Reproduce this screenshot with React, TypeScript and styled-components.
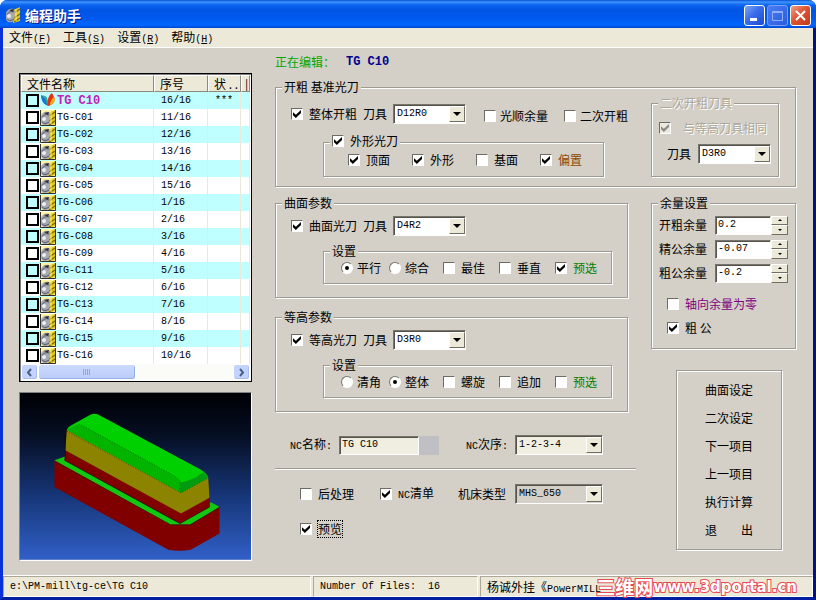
import React from "react";
import styled, { createGlobalStyle, css } from "styled-components";

const FACE = "#d4d0c8";
const CREAM = "#ece9d8";
const SONG = '"Noto Sans CJK SC", "Liberation Sans", sans-serif';
const MONO = '"Liberation Mono", "Noto Sans CJK SC", monospace';

const GlobalStyle = createGlobalStyle`
  *, *::before, *::after { box-sizing: border-box; }
  body {
    margin: 0;
    background: #fff;
    color: #000;
    font: 12px/16px ${SONG};
  }
  button, input, select { font: inherit; color: inherit; margin: 0; }
`;

const Window = styled.div`
  min-height: 100vh;
  display: flex;
  flex-direction: column;
  background: ${FACE};
  border: 3px solid #0831d9;
  border-top: 0;
  border-right-color: #00138c;
  border-bottom-color: #001ea0;
  border-radius: 8px 8px 0 0;
`;

const TitleBar = styled.header`
  height: 28px;
  margin: 0 -3px;
  padding: 2px 5px 0 5px;
  display: flex;
  align-items: center;
  gap: 4px;
  border-radius: 7px 7px 0 0;
  background: linear-gradient(#0a50d0 0, #3d95ff 2px, #0a63ee 5px, #0054e3 10px, #0058ee 18px, #0066ff 25px, #0046cf 28px);
`;

const Title = styled.h1`
  flex: 1;
  margin: 0;
  font-size: 14px;
  line-height: 20px;
  color: #fff;
  text-shadow: 1px 1px #0a1883;
`;

const CaptionButtons = styled.div`
  display: flex;
  gap: 2px;
`;

const CaptionButton = styled.button<{ $kind: "min" | "max" | "close" }>`
  width: 21px;
  height: 21px;
  padding: 0;
  display: grid;
  place-items: center;
  border: 1px solid ${(p) => (p.$kind === "max" ? "#7ba0f0" : "#fff")};
  border-radius: 3px;
  background: ${(p) =>
    p.$kind === "close"
      ? "linear-gradient(135deg, #f0a088, #dd5535 45%, #c03a18)"
      : p.$kind === "max"
        ? "linear-gradient(135deg, #4a7ef0, #2a5be0)"
        : "linear-gradient(135deg, #7ea4f8, #3a6cea 45%, #1c4bd0)"};
`;

const MenuBar = styled.nav`
  height: 20px;
  padding: 0 6px;
  display: flex;
  align-items: center;
  gap: 12px;
  background: ${CREAM};
  border-bottom: 1px solid #fff;
`;

const MenuButton = styled.button`
  padding: 0;
  border: 0;
  background: none;
  white-space: nowrap;
`;

const Key = styled.span`
  font: 10px/14px ${MONO};
`;

const Body = styled.main`
  flex: 1;
  display: grid;
  grid-template-columns: 233px minmax(0, 1fr);
  gap: 23px;
  padding: 5px 17px 12px 16px;
`;

const Side = styled.div`
  display: flex;
  flex-direction: column;
  gap: 10px;
  padding-top: 20px;
`;

const ListFrame = styled.div`
  padding: 1px;
  border: 1px solid #000;
  background: #fff;
  box-shadow: inset 1px 1px #808080;
`;

const FileTable = styled.table`
  width: 100%;
  table-layout: fixed;
  border-collapse: separate;
  border-spacing: 0;
`;

const HeadCell = styled.th`
  height: 17px;
  padding: 0 0 0 5px;
  overflow: hidden;
  white-space: nowrap;
  text-align: left;
  font-weight: 400;
  line-height: 15px;
  background: ${CREAM};
  border: 1px solid;
  border-color: #fff #8c8a7c #8c8a7c #fff;
  &:last-child { padding-left: 3px; }
`;

const Cell = styled.td`
  height: 17px;
  padding: 0 0 0 7px;
  overflow: hidden;
  white-space: nowrap;
  border-right: 1px solid #ece9d8;
  font: 10px/16px ${MONO};
  &:first-child { padding-left: 5px; }
`;

const FileRow = styled.tr<{ $current?: boolean }>`
  background: #fff;
  &:nth-child(odd) { background: #bfffff; }
  ${(p) => p.$current && css`td:first-child { color: #c020c0; font: bold 12px/16px ${MONO}; }`}
`;

const FileLabel = styled.label`
  display: flex;
  align-items: center;
  gap: 1px;
`;

const FileCheck = styled.input`
  appearance: none;
  width: 13px;
  height: 13px;
  border: 2px solid #000;
`;

const HScroll = styled.div`
  height: 16px;
  display: flex;
  justify-content: space-between;
  background: #fbfbf8;
`;

const ScrollButton = styled.button`
  width: 17px;
  height: 16px;
  padding: 0;
  display: grid;
  place-items: center;
  border: 1px solid #fff;
  border-radius: 3px;
  background: #c3d3fd;
  box-shadow: inset -1px -1px #a8bdf0;
`;

const ScrollTrack = styled.div`
  flex: 1;
`;

const Thumb = styled.div`
  width: 50%;
  height: 16px;
  display: flex;
  align-items: center;
  justify-content: center;
  border: 1px solid #fff;
  border-radius: 3px;
  background: linear-gradient(#cbdafe, #b9cbf8);
  box-shadow: inset -1px -1px #98b0e8;
`;

const Preview = styled.div`
  border: 1px solid;
  border-color: #808080 #fff #fff #808080;
  svg { display: block; width: 100%; }
`;

const Main = styled.div`
  display: flex;
  flex-direction: column;
  gap: 8px;
`;

const Editing = styled.div`
  display: flex;
  align-items: center;
  gap: 11px;
  height: 18px;
  color: #00a800;
`;

const EditingName = styled.strong`
  color: #000090;
  font: bold 12px/16px ${MONO};
`;

const Group = styled.fieldset<{ $pad?: string }>`
  min-width: 0;
  margin: 0;
  padding: ${(p) => p.$pad ?? "0"};
  border: 1px solid #9d9a92;
  box-shadow: 1px 1px #fff, inset 1px 1px #fff;
`;

const GroupTitle = styled.legend<{ $disabled?: boolean; $low?: boolean }>`
  margin-left: 6px;
  padding: 0 2px ${(p) => (p.$low ? "2px" : "0")};
  background: ${FACE};
  white-space: nowrap;
  ${(p) => p.$disabled && css`color: #aca899; text-shadow: 1px 1px #fff;`}
`;

const RoughBody = styled.div`
  display: grid;
  grid-template-columns: minmax(0, 1fr) 128px;
  gap: 20px;
`;

const RoughMain = styled.div`
  padding: 9px 0 9px 15px;
`;

const SubGroup = styled(Group)<{ $top: number; $width: number }>`
  width: ${(p) => p.$width}px;
  margin: ${(p) => p.$top}px 0 0 32px;
`;

const Row = styled.div<{ $gap?: number; $end?: boolean; $left?: number }>`
  display: flex;
  align-items: ${(p) => (p.$end ? "flex-end" : "center")};
  gap: ${(p) => p.$gap ?? 6}px;
  padding-left: ${(p) => p.$left ?? 0}px;
`;

const ToolRow = styled(Row)`
  height: 20px;
`;

const ChoiceLabel = styled.label<{ $color?: string; $width?: number; $disabled?: boolean; $gap?: number }>`
  display: flex;
  flex: none;
  align-items: center;
  gap: ${(p) => p.$gap ?? 6}px;
  width: ${(p) => (p.$width ? p.$width + "px" : "auto")};
  white-space: nowrap;
  color: ${(p) => p.$color ?? "#000"};
  ${(p) => p.$disabled && css`color: #aca899; text-shadow: 1px 1px #fff;`}
`;

const Box = styled.input`
  appearance: none;
  flex: none;
  width: 12px;
  height: 12px;
  display: grid;
  place-content: center;
  background: #fff;
  border: 1px solid;
  border-color: #6e6b62 #fff #fff #6e6b62;
  outline: 0;
  &:checked::before {
    content: "";
    width: 8px;
    height: 8px;
    background: #000;
    clip-path: polygon(0 28%, 36% 60%, 100% 0, 100% 38%, 36% 100%, 0 66%);
  }
  &:disabled { background: #ece9e0; }
  &:disabled::before { background: #8c8a80; }
`;

const Dot = styled.input`
  appearance: none;
  flex: none;
  width: 12px;
  height: 12px;
  display: grid;
  place-content: center;
  background: #fff;
  border: 1px solid;
  border-color: #77746c #fff #fff #77746c;
  border-radius: 50%;
  &:checked::before {
    content: "";
    width: 4px;
    height: 4px;
    border-radius: 50%;
    background: #000;
  }
`;

const FocusText = styled.span`
  outline: 1px dotted #000;
`;

const SelectFrame = styled.span<{ $width: number; $bg?: string }>`
  flex: none;
  display: grid;
  grid-template-columns: 1fr 16px;
  width: ${(p) => p.$width}px;
  height: 20px;
  background: ${(p) => p.$bg ?? "#fff"};
  border: 1px solid;
  border-color: #77746a #fff #fff #77746a;
  box-shadow: inset 1px 1px #55534c;
`;

const SelectBox = styled.select`
  grid-area: 1 / 1 / 2 / 3;
  appearance: none;
  width: 100%;
  padding: 0 16px 0 3px;
  border: 0;
  background: none;
  font: 10px/14px ${MONO};
`;

const Arrow = styled.span`
  grid-area: 1 / 2;
  pointer-events: none;
  display: grid;
  place-items: center;
  margin: 1px 0;
  background: ${CREAM};
  border: 1px solid;
  border-color: #fff #716f64 #716f64 #fff;
  &::before {
    content: "";
    border: 4px solid transparent;
    border-top-color: #000;
    border-bottom: 0;
  }
`;

const Lower = styled.div`
  display: grid;
  grid-template-columns: minmax(0, 1fr) 145px;
  gap: 23px;
`;

const Stack = styled.div<{ $gap: number }>`
  display: flex;
  flex-direction: column;
  gap: ${(p) => p.$gap}px;
`;

const SpinRow = styled.div`
  display: flex;
  align-items: center;
  gap: 8px;
  height: 24px;
`;

const SpinFrame = styled.span`
  display: flex;
  width: 73px;
  height: 19px;
`;

const TextBox = styled.input<{ $bg?: string }>`
  flex: 1;
  min-width: 0;
  padding: 0 2px;
  border: 1px solid;
  border-color: #77746a #fff #fff #77746a;
  border-radius: 0;
  box-shadow: inset 1px 1px #55534c;
  background: ${(p) => p.$bg ?? "#fff"};
  outline: 0;
  font: 10px/14px ${MONO};
`;

const SpinButtons = styled.span`
  width: 17px;
  display: grid;
  grid-template-rows: 1fr 1fr;
`;

const SpinButton = styled.button<{ $down?: boolean }>`
  min-height: 0;
  padding: 0;
  display: grid;
  place-items: center;
  background: ${CREAM};
  border: 1px solid;
  border-color: #fff #716f64 #716f64 #fff;
  &::before {
    content: "";
    border: 2px solid transparent;
    ${(p) => (p.$down ? "border-top-color: #000; border-bottom: 0;" : "border-bottom-color: #000; border-top: 0;")}
  }
`;

const Actions = styled.div`
  align-self: flex-start;
  width: 106px;
  margin-left: 25px;
  padding: 5px 0;
  display: flex;
  flex-direction: column;
  border: 1px solid #9d9a92;
  box-shadow: 1px 1px #fff, inset 1px 1px #fff;
`;

const ActionButton = styled.button`
  height: 28px;
  padding: 0;
  border: 0;
  background: none;
  white-space: pre;
`;

const NcArea = styled.div`
  padding: 14px 0 0;
`;

const NcRow = styled.div<{ $top?: number; $left: number }>`
  display: flex;
  align-items: center;
  height: 20px;
  margin-top: ${(p) => p.$top ?? 0}px;
  padding-left: ${(p) => p.$left}px;
`;

const NcField = styled.label<{ $width: number }>`
  flex: none;
  display: flex;
  align-items: center;
  justify-content: space-between;
  width: ${(p) => p.$width}px;
  white-space: nowrap;
`;

const NameBox = styled.span`
  display: flex;
  width: 100px;
  height: 19px;
`;

const NameTail = styled.span`
  width: 20px;
  background: #c0c0c4;
`;

const Spacer = styled.span`
  flex: 0 1 27px;
`;

const Divider = styled.hr`
  width: 361px;
  margin: 13px 0 0;
  border: 0;
  border-top: 1px solid #9d9a92;
  border-bottom: 1px solid #fff;
`;

const StatusBar = styled.footer`
  position: relative;
  height: 22px;
  display: grid;
  grid-template-columns: 308px 165px minmax(0, 1fr);
  gap: 2px;
  background: ${CREAM};
  border-top: 1px solid #fff;
`;

const StatusCell = styled.div`
  padding: 2px 6px 0;
  overflow: hidden;
  white-space: pre;
  border: 1px solid;
  border-color: #aca899 #fff #fff #aca899;
  font: 10px/16px ${MONO};
`;

const Han = styled.span`
  font: 12px/16px ${SONG};
`;

const SiteMark = styled.div`
  position: absolute;
  right: 16px;
  bottom: 1px;
  display: flex;
  align-items: center;
  color: #fff;
  font: bold 15px/18px "DejaVu Sans", sans-serif;
  -webkit-text-stroke: 2px #e84850;
  paint-order: stroke fill;
`;

const SiteName = styled.span`
  font: bold 19px/18px ${SONG};
`;

const CutterIcon = ({ framed }: { framed?: boolean }) => (
  <svg width="16" height="16" viewBox="0 0 16 16" aria-hidden="true">
    {framed && <rect width="16" height="16" fill="#fff4a0" />}
    <path d="M8 3 15 0v14l-7 2z" fill="#e0c818" />
    <path d="M9 6 15 2M9 11l6-4M9 15l6-4" stroke="#806c00" strokeWidth="1.5" />
    <path d="M11 2v12" stroke="#fff080" />
    <path d="M1 7C1 3 5 1 9 2l1 3-1 9c-3 2-7 2-8-2z" fill="#a8a8b0" />
    <path d="M2 8c1-3 4-4 7-3M2 12c2 2 4 2 7 0" fill="none" stroke="#505868" />
    <circle cx="4" cy="9" r="2" fill="#eceef4" />
    <path d="M4 3l4 2 1-3" fill="#303030" />
    {framed && <path d="M0.5 0v15.500H15.500V0" fill="none" stroke="#303030" />}
  </svg>
);

const CurrentIcon = () => (
  <svg width="16" height="16" viewBox="0 0 16 16" aria-hidden="true">
    <path d="M1 2l5 2 3 9C4 12 1 8 1 2z" fill="#1878c8" />
    <path d="M3 3l3 2 2 6" fill="none" stroke="#30b0a0" strokeWidth="2" />
    <path d="M8 13C7 8 8 3 12 0l2 4c2 4-1 8-6 9z" fill="#e83010" />
    <path d="M10 12c0-4 2-6 4-8 2 3 0 7-4 8z" fill="#f8b020" />
  </svg>
);

const PartPreview = () => (
  <svg viewBox="62 12 690 498" role="img" aria-label="预览">
    <defs>
      <linearGradient id="sky" x1="0" y1="0" x2="0" y2="1">
        <stop offset="0" stopColor="#000004" />
        <stop offset="0.25" stopColor="#050e22" />
        <stop offset="0.6" stopColor="#163474" />
        <stop offset="1" stopColor="#3060c8" />
      </linearGradient>
    </defs>
    <rect x="62" y="12" width="690" height="498" fill="url(#sky)" />
    <path d="M165 213V293L505 480Q538 486 572 480L658 432V350z" fill="#800000" />
    <path d="M165 213 197 202 540 390 632 338 658 352 570 405H512z" fill="#10c810" />
    <path d="M165 216 512 406H570L658 354" fill="none" stroke="#302000" strokeWidth="2" />
    <path d="M197 183 195 213 540 402 629 352V322L543 370z" fill="#800000" />
    <path d="M202 122 197 183 543 372 628 325 624 262 543 308z" fill="#8c8400" />
    <path d="M202 122Q206 112 218 107L272 77Q285 71 298 78L600 240Q622 252 624 266L543 310z" fill="#00d000" />
    <path d="M202 122 238 104 500 247Q535 265 540 276L543 310z" fill="#00b400" />
    <path d="M540 280Q580 272 610 248L624 265 543 310z" fill="#009c10" />
    <path d="M202 126 543 310 624 266M238 104 500 247Q535 265 540 276V308M628 266V352" fill="none" stroke="#104000" strokeWidth="2" strokeDasharray="3 5" />
    <path d="M195 213 540 402 629 352M197 130V212" fill="none" stroke="#200000" strokeWidth="2" />
  </svg>
);

type ChoiceProps = {
  children: React.ReactNode;
  checked?: boolean;
  disabled?: boolean;
  color?: string;
  width?: number;
  gap?: number;
};

const Check = ({ children, checked, disabled, color, width, gap }: ChoiceProps) => (
  <ChoiceLabel $color={color} $width={width} $disabled={disabled} $gap={gap}>
    <Box type="checkbox" defaultChecked={checked} disabled={disabled} />
    {children}
  </ChoiceLabel>
);

const Radio = ({ children, checked, name }: ChoiceProps & { name: string }) => (
  <ChoiceLabel $width={48} $gap={4}>
    <Dot type="radio" name={name} defaultChecked={checked} />
    {children}
  </ChoiceLabel>
);

const Combo = ({ value, width = 73, bg, id }: { value: string; width?: number; bg?: string; id: string }) => (
  <SelectFrame $width={width} $bg={bg}>
    <SelectBox id={id} defaultValue={value}>
      <option>{value}</option>
    </SelectBox>
    <Arrow />
  </SelectFrame>
);

const ToolPicker = ({ title, tool, id }: { title: string; tool: string; id: string }) => (
  <>
    <Check checked>{title}</Check>
    <label htmlFor={id}>刀具</label>
    <Combo id={id} value={tool} />
  </>
);

const ChoiceGap = styled.span`
  width: 6px;
`;

const StrategyBody = styled.div`
  padding: 5px 0 13px 15px;
`;

type StrategyProps = {
  id: string;
  title: string;
  pass: string;
  tool: string;
  radios: string[];
  selected: number;
  checks: string[];
  preselect: boolean;
};

const Strategy = ({ id, title, pass, tool, radios, selected, checks, preselect }: StrategyProps) => (
  <Group>
    <GroupTitle>{title}</GroupTitle>
    <StrategyBody>
      <ToolRow>
        <ToolPicker title={pass} tool={tool} id={id + "-tool"} />
      </ToolRow>
      <SubGroup $top={7} $width={289} $pad="1px 0 7px">
        <GroupTitle>设置</GroupTitle>
        <Row $gap={0} $left={17}>
          {radios.map((r, i) => (
            <Radio key={r} name={id} checked={i === selected}>{r}</Radio>
          ))}
          <ChoiceGap />
          {checks.map((c) => (
            <Check key={c} width={56}>{c}</Check>
          ))}
          <Check checked={preselect} color="#008000">预选</Check>
        </Row>
      </SubGroup>
    </StrategyBody>
  </Group>
);

const AllowanceBody = styled.div`
  padding: 2px 7px 12px;
`;

const AllowanceChecks = styled.div`
  display: flex;
  flex-direction: column;
  gap: 8px;
  padding: 11px 0 0 8px;
`;

const SecondBody = styled.div`
  display: flex;
  flex-direction: column;
  gap: 8px;
  padding: 9px 7px 12px;
`;

const SecondTool = styled.div`
  display: flex;
  align-items: center;
  justify-content: space-between;
  padding-left: 8px;
`;

const Allowance = ({ label, value, id }: { label: string; value: string; id: string }) => (
  <SpinRow>
    <label htmlFor={id}>{label}</label>
    <SpinFrame>
      <TextBox id={id} defaultValue={value} />
      <SpinButtons>
        <SpinButton aria-label="增加" />
        <SpinButton $down aria-label="减少" />
      </SpinButtons>
    </SpinFrame>
  </SpinRow>
);

const menus = [["文件", "F"], ["工具", "S"], ["设置", "R"], ["帮助", "H"]];

const files = [
  ["TG C10", "16/16"], ["TG-C01", "11/16"], ["TG-C02", "12/16"], ["TG-C03", "13/16"],
  ["TG-C04", "14/16"], ["TG-C05", "15/16"], ["TG-C06", "1/16"], ["TG-C07", "2/16"],
  ["TG-C08", "3/16"], ["TG-C09", "4/16"], ["TG-C11", "5/16"], ["TG-C12", "6/16"],
  ["TG-C13", "7/16"], ["TG-C14", "8/16"], ["TG-C15", "9/16"], ["TG-C16", "10/16"],
];

const actions = ["曲面设定", "二次设定", "下一项目", "上一项目", "执行计算", "退\u3000\u3000出"];

export default function App() {
  return (
    <>
      <GlobalStyle />
      <Window>
        <TitleBar>
          <CutterIcon />
          <Title>编程助手</Title>
          <CaptionButtons>
            <CaptionButton $kind="min" aria-label="最小化">
              <svg width="15" height="15"><path d="M3 10h7v3H3z" fill="#fff" /></svg>
            </CaptionButton>
            <CaptionButton $kind="max" aria-label="最大化">
              <svg width="15" height="15"><path d="M2.500 3.500h10v9h-10zM2 4.500h11" fill="none" stroke="#8fb0f6" /></svg>
            </CaptionButton>
            <CaptionButton $kind="close" aria-label="关闭">
              <svg width="15" height="15"><path d="M3 3l9 9M12 3l-9 9" stroke="#fff" strokeWidth="2" /></svg>
            </CaptionButton>
          </CaptionButtons>
        </TitleBar>
        <MenuBar>
          {menus.map(([name, key]) => (
            <MenuButton key={key}>
              {name}<Key>(<u>{key}</u>)</Key>
            </MenuButton>
          ))}
        </MenuBar>
        <Body>
          <Side>
            <ListFrame>
              <FileTable>
                <colgroup>
                  <col width="133" /><col width="54" /><col width="33" /><col />
                </colgroup>
                <thead>
                  <tr>
                    <HeadCell>文件名称</HeadCell>
                    <HeadCell>序号</HeadCell>
                    <HeadCell>状 . .</HeadCell>
                    <HeadCell>|</HeadCell>
                  </tr>
                </thead>
                <tbody>
                  {files.map(([name, order], i) => (
                    <FileRow key={name} $current={i === 0}>
                      <Cell>
                        <FileLabel>
                          <FileCheck type="checkbox" />
                          {i === 0 ? <CurrentIcon /> : <CutterIcon framed />}
                          {name}
                        </FileLabel>
                      </Cell>
                      <Cell>{order}</Cell>
                      <Cell>{i === 0 ? "***" : ""}</Cell>
                      <Cell />
                    </FileRow>
                  ))}
                </tbody>
              </FileTable>
              <HScroll>
                <ScrollButton aria-label="向左">
                  <svg width="9" height="9"><path d="M6 1 3 4.500 6 8" fill="none" stroke="#4d6185" strokeWidth="2" /></svg>
                </ScrollButton>
                <ScrollTrack>
                  <Thumb>
                    <svg width="9" height="6"><path d="M1.500 0v6M3.500 0v6M5.500 0v6M7.500 0v6" stroke="#8ba6e6" /></svg>
                  </Thumb>
                </ScrollTrack>
                <ScrollButton aria-label="向右">
                  <svg width="9" height="9"><path d="M3 1l3 3.500L3 8" fill="none" stroke="#4d6185" strokeWidth="2" /></svg>
                </ScrollButton>
              </HScroll>
            </ListFrame>
            <Preview><PartPreview /></Preview>
          </Side>
          <Main>
            <Editing>
              正在编辑：<EditingName>TG C10</EditingName>
            </Editing>
            <Group $pad="0 16px 0 0">
              <GroupTitle>开粗 基准光刀</GroupTitle>
              <RoughBody>
                <RoughMain>
                  <Row $end $gap={18}>
                    <ToolRow>
                      <ToolPicker title="整体开粗" tool="D12R0" id="rough-tool" />
                    </ToolRow>
                    <Row $gap={16}>
                      <Check gap={4}>光顺余量</Check>
                      <Check gap={4}>二次开粗</Check>
                    </Row>
                  </Row>
                  <SubGroup $top={9} $width={281} $pad="1px 0 8px">
                    <GroupTitle $low><Check checked>外形光刀</Check></GroupTitle>
                    <Row $gap={0} $left={24}>
                      <Check checked width={64}>顶面</Check>
                      <Check checked width={64}>外形</Check>
                      <Check width={64}>基面</Check>
                      <Check checked color="#904800">偏置</Check>
                    </Row>
                  </SubGroup>
                </RoughMain>
                <div>
                  <Group>
                    <GroupTitle $disabled>二次开粗刀具</GroupTitle>
                    <SecondBody>
                      <Check checked disabled gap={12}>与等高刀具相同</Check>
                      <SecondTool>
                        <label htmlFor="second-tool">刀具</label>
                        <Combo id="second-tool" value="D3R0" />
                      </SecondTool>
                    </SecondBody>
                  </Group>
                </div>
              </RoughBody>
            </Group>
            <Lower>
              <div>
                <Stack $gap={11}>
                  <Strategy id="surface" title="曲面参数" pass="曲面光刀" tool="D4R2"
                    radios={["平行", "综合"]} selected={0} checks={["最佳", "垂直"]} preselect />
                  <Strategy id="contour" title="等高参数" pass="等高光刀" tool="D3R0"
                    radios={["清角", "整体"]} selected={1} checks={["螺旋", "追加"]} preselect={false} />
                </Stack>
                <NcArea>
                  <NcRow $left={15} $top={9}>
                    <NcField $width={149}>
                      <span><Key>NC</Key>名称<Key>:</Key></span>
                      <NameBox>
                        <TextBox defaultValue="TG C10" $bg="#f0eee0" />
                        <NameTail />
                      </NameBox>
                    </NcField>
                    <Spacer />
                    <NcField $width={137}>
                      <span><Key>NC</Key>次序<Key>:</Key></span>
                      <Combo id="nc-order" value="1-2-3-4" width={88} bg="#f0eee0" />
                    </NcField>
                  </NcRow>
                  <Divider />
                  <NcRow $left={25} $top={14}>
                    <Check width={80}>后处理</Check>
                    <Check checked width={78}><span><Key>NC</Key>清单</span></Check>
                    <NcField $width={145}>
                      机床类型
                      <Combo id="machine" value="MHS_650" width={88} bg={FACE} />
                    </NcField>
                  </NcRow>
                  <NcRow $left={25} $top={15}>
                    <Check checked><FocusText>预览</FocusText></Check>
                  </NcRow>
                </NcArea>
              </div>
              <Stack $gap={21}>
                <Group>
                  <GroupTitle>余量设置</GroupTitle>
                  <AllowanceBody>
                    <Allowance id="rough-allow" label="开粗余量" value="0.2" />
                    <Allowance id="fine-allow" label="精公余量" value="-0.07" />
                    <Allowance id="coarse-allow" label="粗公余量" value="-0.2" />
                    <AllowanceChecks>
                      <Check color="#800080">轴向余量为零</Check>
                      <Check checked>粗 公</Check>
                    </AllowanceChecks>
                  </AllowanceBody>
                </Group>
                <Actions>
                  {actions.map((a) => (
                    <ActionButton key={a}>{a}</ActionButton>
                  ))}
                </Actions>
              </Stack>
            </Lower>
          </Main>
        </Body>
        <StatusBar>
          <StatusCell>e:\PM-mill\tg-ce\TG C10</StatusCell>
          <StatusCell>Number Of Files:  16</StatusCell>
          <StatusCell><Han>杨诚外挂《</Han>PowerMILL</StatusCell>
          <SiteMark><SiteName>三维网</SiteName>www.3dportal.cn</SiteMark>
        </StatusBar>
      </Window>
    </>
  );
}
